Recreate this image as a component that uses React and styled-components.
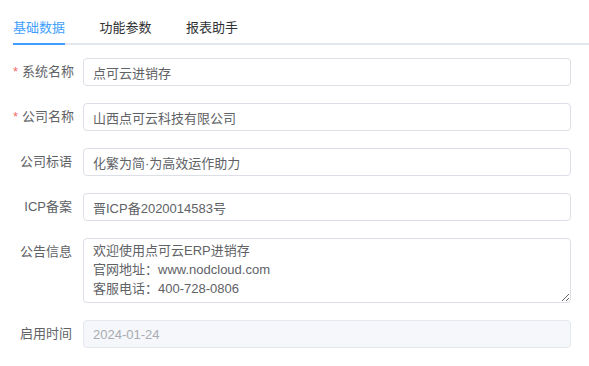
import React from 'react'
import styled, { createGlobalStyle } from 'styled-components'

const GlobalStyle = createGlobalStyle`
  html, body {
    margin: 0;
    padding: 0;
    background: #fff;
  }
  body {
    font-family: "Liberation Sans", "Noto Sans CJK SC", sans-serif;
    font-size: 13px;
    color: #606266;
  }
  * {
    box-sizing: border-box;
  }
`

const Page = styled.div`
  width: 589px;
  padding: 0 0 0 13px;
`

const TabBar = styled.div`
  display: flex;
  align-items: flex-end;
  gap: 34.5px;
  height: 45px;
  border-bottom: 2px solid #e4e7ed;
`

const Tab = styled.div`
  height: 45px;
  padding-top: 12px;
  line-height: 31px;
  margin-bottom: -2px;
  font-size: 13px;
  color: ${p => (p.active ? '#409eff' : '#303133')};
  border-bottom: 2px solid ${p => (p.active ? '#409eff' : 'transparent')};
  cursor: pointer;
`

const Form = styled.form`
  display: flex;
  flex-direction: column;
  gap: 17px;
  padding: 13px 18px 0 0;
`

const Row = styled.div`
  display: flex;
  align-items: flex-start;
`

const Label = styled.label`
  width: 70px;
  flex: none;
  padding-right: 11px;
  text-align: right;
  line-height: 28px;
  font-size: 13px;
  color: #606266;
  white-space: nowrap;
  &::before {
    content: ${p => (p.required ? '"*"' : 'none')};
    color: #f56c6c;
    margin-right: 4px;
  }
`

const Input = styled.input`
  flex: 1;
  height: 28px;
  padding: 0 9px;
  border: 1px solid ${p => (p.disabled ? '#e4e7ed' : '#dcdfe6')};
  border-radius: 4px;
  background: ${p => (p.disabled ? '#f5f7fa' : '#fff')};
  color: ${p => (p.disabled ? '#a8abb2' : '#606266')};
  font: inherit;
  font-size: 13px;
  outline: none;
`

const TextArea = styled.textarea`
  flex: 1;
  height: 65px;
  padding: 2px 9px 4px;
  border: 1px solid #dcdfe6;
  border-radius: 4px;
  color: #606266;
  font: inherit;
  font-size: 13px;
  line-height: 19px;
  outline: none;
  resize: vertical;
`

const notice = '欢迎使用点可云ERP进销存\n官网地址：www.nodcloud.com\n客服电话：400-728-0806'

export default function App() {
  return (
    <Page>
      <GlobalStyle />
      <TabBar>
        <Tab active>基础数据</Tab>
        <Tab>功能参数</Tab>
        <Tab>报表助手</Tab>
      </TabBar>
      <Form>
        <Row>
          <Label required>系统名称</Label>
          <Input defaultValue="点可云进销存" />
        </Row>
        <Row>
          <Label required>公司名称</Label>
          <Input defaultValue="山西点可云科技有限公司" />
        </Row>
        <Row>
          <Label>公司标语</Label>
          <Input defaultValue="化繁为简·为高效运作助力" />
        </Row>
        <Row>
          <Label>ICP备案</Label>
          <Input defaultValue="晋ICP备2020014583号" />
        </Row>
        <Row>
          <Label>公告信息</Label>
          <TextArea defaultValue={notice} />
        </Row>
        <Row>
          <Label>启用时间</Label>
          <Input disabled defaultValue="2024-01-24" />
        </Row>
      </Form>
    </Page>
  )
}
